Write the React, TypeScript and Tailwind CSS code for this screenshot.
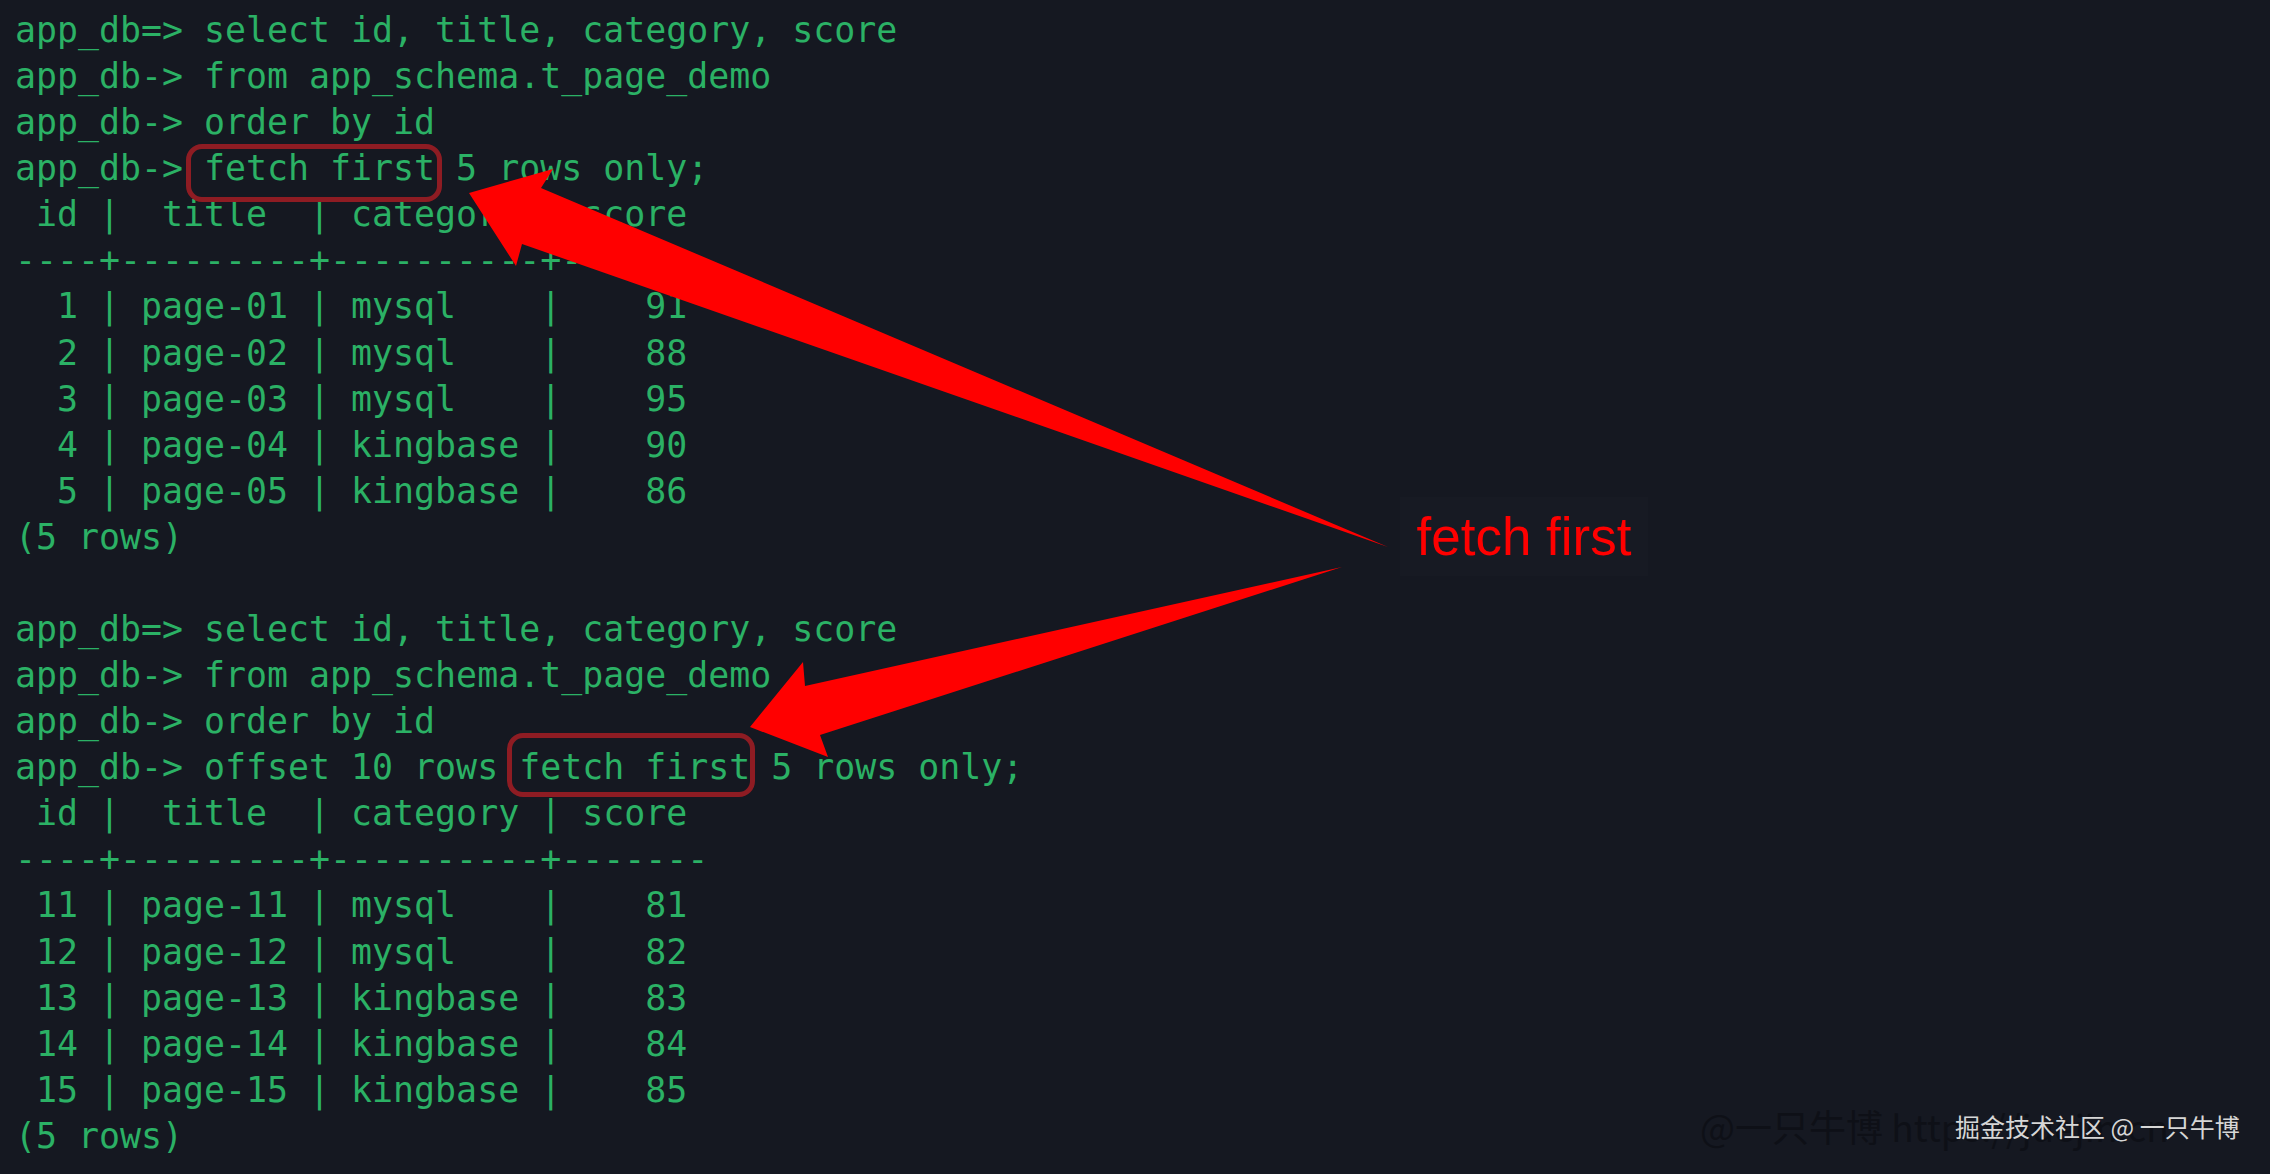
const lines = [
  'app_db=> select id, title, category, score',
  'app_db-> from app_schema.t_page_demo',
  'app_db-> order by id',
  'app_db-> fetch first 5 rows only;',
  ' id |  title  | category | score',
  '----+---------+----------+-------',
  '  1 | page-01 | mysql    |    91',
  '  2 | page-02 | mysql    |    88',
  '  3 | page-03 | mysql    |    95',
  '  4 | page-04 | kingbase |    90',
  '  5 | page-05 | kingbase |    86',
  '(5 rows)',
  '',
  'app_db=> select id, title, category, score',
  'app_db-> from app_schema.t_page_demo',
  'app_db-> order by id',
  'app_db-> offset 10 rows fetch first 5 rows only;',
  ' id |  title  | category | score',
  '----+---------+----------+-------',
  ' 11 | page-11 | mysql    |    81',
  ' 12 | page-12 | mysql    |    82',
  ' 13 | page-13 | kingbase |    83',
  ' 14 | page-14 | kingbase |    84',
  ' 15 | page-15 | kingbase |    85',
  '(5 rows)',
]

function Arrows() {
  return (
    <svg
      className="absolute inset-0 pointer-events-none"
      width={2270}
      height={1174}
      viewBox="0 0 2270 1174"
    >
      {/* upper arrow */}
      <polygon
        points="469,193 553,169 541,188 1388,547 522,244 516,266"
        fill="#ff0000"
      />
      {/* lower arrow */}
      <polygon
        points="750,727 803,662 805,686 1342,567 820,735 828,757"
        fill="#ff0000"
      />
    </svg>
  )
}

export default function App() {
  return (
    <div className="relative w-[2270px] h-[1174px] overflow-hidden bg-[#151821]">
      {/* terminal output */}
      <div className="pt-[7px] pl-[15px] font-['DejaVu_Sans_Mono',monospace] text-[34.9px] leading-[46.08px] text-[#2bb165]">
        {lines.map((l, i) => (
          <div key={i} className="whitespace-pre h-[46.08px]">
            {l}
          </div>
        ))}
      </div>

      {/* highlight boxes */}
      <div className="absolute left-[186px] top-[144px] w-[256px] h-[58px] rounded-[16px] border-[5px] border-[#8e1c23]" />
      <div className="absolute left-[507px] top-[733px] w-[248px] h-[64px] rounded-[16px] border-[5px] border-[#8e1c23]" />

      <Arrows />

      {/* annotation label */}
      <div className="absolute left-[1400px] top-[497px] w-[248px] h-[79px] flex items-center justify-center bg-[#171a23]">
        <span className="font-['Liberation_Sans',Arial,sans-serif] text-[53px] leading-none text-[#ff0000]">
          fetch first
        </span>
      </div>

      {/* watermark */}
      <div className="absolute left-[1700px] top-[1108px] whitespace-nowrap font-['Noto_Sans_CJK_SC',sans-serif] text-[37px] leading-none text-[#0e1017]">
        @一只牛博 https://juejin.cn
      </div>
      <div className="absolute left-[1955px] top-[1114px] whitespace-nowrap font-['Noto_Sans_CJK_SC',sans-serif] text-[25px] leading-none text-[#d6d6d6]">
        掘金技术社区 @ 一只牛博
      </div>
    </div>
  )
}
